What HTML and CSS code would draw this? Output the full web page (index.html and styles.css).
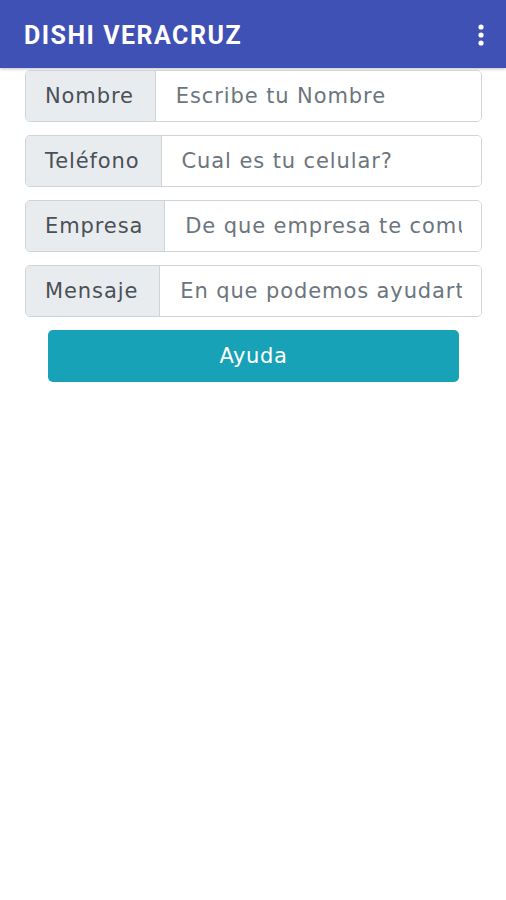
FILE: index.html
```html
<!DOCTYPE html>
<html lang="es">
<head>
    <meta charset="UTF-8">
    <meta name="viewport" content="width=device-width, initial-scale=1.0">
    <title>DISHI VERACRUZ</title>
    <link rel="stylesheet" href="styles.css">
</head>
<body>
    <header class="app-bar">
        <span class="app-title">DISHI VERACRUZ</span>
        <button class="menu-button" aria-label="Más opciones">
            <svg width="8" height="22" viewBox="0 0 8 22">
                <circle cx="4" cy="3" r="2.6" fill="#fff"/>
                <circle cx="4" cy="11" r="2.6" fill="#fff"/>
                <circle cx="4" cy="19" r="2.6" fill="#fff"/>
            </svg>
        </button>
    </header>
    <form class="contact-form">
        <div class="input-group">
            <label class="group-label" for="nombre">Nombre</label>
            <input class="group-input" id="nombre" type="text" placeholder="Escribe tu Nombre">
        </div>
        <div class="input-group">
            <label class="group-label" for="telefono">Teléfono</label>
            <input class="group-input" id="telefono" type="text" placeholder="Cual es tu celular?">
        </div>
        <div class="input-group">
            <label class="group-label" for="empresa">Empresa</label>
            <input class="group-input" id="empresa" type="text" placeholder="De que empresa te comunicas?">
        </div>
        <div class="input-group">
            <label class="group-label" for="mensaje">Mensaje</label>
            <input class="group-input" id="mensaje" type="text" placeholder="En que podemos ayudarte?">
        </div>
        <button class="help-button" type="submit">Ayuda</button>
    </form>
</body>
</html>
```

FILE: styles.css
```css
body {
    margin: 0;
    font-family: "DejaVu Sans", Roboto, sans-serif;
    background-color: #fff;
}

.app-bar {
    height: 68px;
    background-color: #3f51b5;
    display: flex;
    align-items: center;
    justify-content: space-between;
    padding: 0 24px;
    box-shadow: 0 1px 3px rgba(0, 0, 0, 0.25);
}

.app-title {
    color: #fff;
    font-family: Roboto, "Liberation Sans", sans-serif;
    font-size: 25px;
    font-weight: bold;
    letter-spacing: 1.5px;
    margin-top: 2px;
}

.menu-button {
    background: none;
    border: none;
    padding: 0;
    margin-right: -3px;
    margin-top: 2px;
    display: flex;
}

.contact-form {
    display: flex;
    flex-direction: column;
    gap: 13px;
    padding: 2px 24px 0 25px;
}

.input-group {
    display: flex;
    height: 52px;
    box-sizing: border-box;
    border: 1px solid #ced4da;
    border-radius: 5px;
    overflow: hidden;
}

.group-label {
    display: flex;
    align-items: center;
    padding: 0 21px 0 19px;
    background-color: #e9ecef;
    border-right: 1px solid #ced4da;
    color: #495057;
    font-size: 21px;
    letter-spacing: 0.9px;
}

.group-input {
    flex: 1;
    min-width: 0;
    border: none;
    outline: none;
    padding: 0 19px 0 20px;
    font-family: inherit;
    font-size: 21px;
    letter-spacing: 0.9px;
    color: #495057;
    background-color: #fff;
}

.group-input::placeholder {
    color: #6c757d;
}

.help-button {
    margin: 0 23px;
    height: 52px;
    border: none;
    border-radius: 5px;
    background-color: #17a2b8;
    color: #fff;
    font-family: inherit;
    font-size: 21px;
    letter-spacing: 0.6px;
}
```
